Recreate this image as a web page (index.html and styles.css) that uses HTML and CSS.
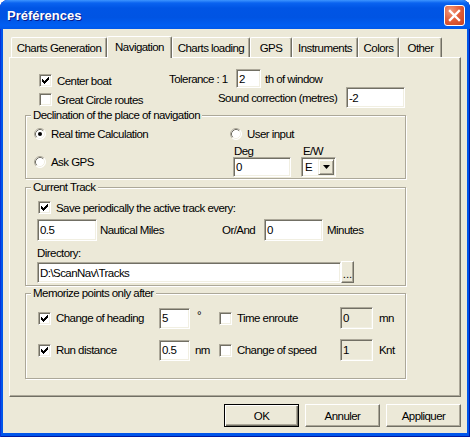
FILE: index.html
```html
<!DOCTYPE html>
<html>
<head>
<meta charset="utf-8">
<title>Préférences</title>
<link rel="stylesheet" href="styles.css">
</head>
<body>
<div class="window">
  <div class="titlebar">
    <span class="title">Préférences</span>
    <span class="close"><svg width="19" height="19" viewBox="0 0 19 19"><path d="M5 5 L14 14 M14 5 L5 14" stroke="#fff" stroke-width="2.4" stroke-linecap="square"/></svg></span>
  </div>
  <div class="client">
    <div class="tabs">
      <span class="tab t-gen">Charts Generation</span>
      <span class="tab tab-sel t-nav">Navigation</span>
      <span class="tab t-load">Charts loading</span>
      <span class="tab t-gps">GPS</span>
      <span class="tab t-ins">Instruments</span>
      <span class="tab t-col">Colors</span>
      <span class="tab t-oth">Other</span>
    </div>
    <div class="panel">
      <div class="top">
        <div class="top-left">
          <div class="ci"><span class="cb"><svg width="11" height="11" viewBox="0 0 11 11" shape-rendering="crispEdges"><path d="M2 4h1v3h-1z M3 5h1v3h-1z M4 6h1v3h-1z M5 5h1v3h-1z M6 4h1v3h-1z M7 3h1v3h-1z M8 2h1v3h-1z" fill="#000"/></svg></span><span>Center boat</span></div>
          <div class="ci"><span class="cb"></span><span>Great Circle routes</span></div>
        </div>
        <div class="top-right">
          <div class="tol-row"><span class="tol-lbl">Tolerance : 1</span><span class="field f-tol">2</span><span class="tol-unit">th of window</span></div>
          <div class="sound-row"><span class="sound-lbl">Sound correction (metres)</span><span class="field f-sound">-2</span></div>
        </div>
      </div>

      <div class="group g-decl">
        <div class="gtitle">Declination of the place of navigation</div>
        <div class="decl-r1">
          <div class="ri decl-left"><svg class="rb" width="12" height="12" viewBox="0 0 12 12"><circle cx="6" cy="6" r="5.5" fill="#fff"/><path d="M2.11 9.89 A5.5 5.5 0 0 1 9.89 2.11" stroke="#ACA899" fill="none"/><path d="M9.89 2.11 A5.5 5.5 0 0 1 2.11 9.89" stroke="#fff" fill="none"/><path d="M2.82 9.18 A4.5 4.5 0 0 1 9.18 2.82" stroke="#716F64" fill="none"/><path d="M9.18 2.82 A4.5 4.5 0 0 1 2.82 9.18" stroke="#F1EFE2" fill="none"/><circle cx="6" cy="6" r="2" fill="#000"/></svg><span>Real time Calculation</span></div>
          <div class="ri"><svg class="rb" width="12" height="12" viewBox="0 0 12 12"><circle cx="6" cy="6" r="5.5" fill="#fff"/><path d="M2.11 9.89 A5.5 5.5 0 0 1 9.89 2.11" stroke="#ACA899" fill="none"/><path d="M9.89 2.11 A5.5 5.5 0 0 1 2.11 9.89" stroke="#fff" fill="none"/><path d="M2.82 9.18 A4.5 4.5 0 0 1 9.18 2.82" stroke="#716F64" fill="none"/><path d="M9.18 2.82 A4.5 4.5 0 0 1 2.82 9.18" stroke="#F1EFE2" fill="none"/></svg><span>User input</span></div>
        </div>
        <div class="decl-r2">
          <div class="decl-left askgps"><div class="ri"><svg class="rb" width="12" height="12" viewBox="0 0 12 12"><circle cx="6" cy="6" r="5.5" fill="#fff"/><path d="M2.11 9.89 A5.5 5.5 0 0 1 9.89 2.11" stroke="#ACA899" fill="none"/><path d="M9.89 2.11 A5.5 5.5 0 0 1 2.11 9.89" stroke="#fff" fill="none"/><path d="M2.82 9.18 A4.5 4.5 0 0 1 9.18 2.82" stroke="#716F64" fill="none"/><path d="M9.18 2.82 A4.5 4.5 0 0 1 2.82 9.18" stroke="#F1EFE2" fill="none"/></svg><span>Ask GPS</span></div></div>
          <div class="col deg-col"><span class="sm-lbl">Deg</span><span class="field f-deg">0</span></div>
          <div class="col ew-col"><span class="sm-lbl">E/W</span><span class="select"><span class="sel-val">E</span><span class="sel-btn"><svg width="7" height="4" viewBox="0 0 7 4"><path d="M0 0H7L3.5 4z" fill="#000"/></svg></span></span></div>
        </div>
      </div>

      <div class="group g-track">
        <div class="gtitle">Current Track</div>
        <div class="ci track-cb"><span class="cb"><svg width="11" height="11" viewBox="0 0 11 11" shape-rendering="crispEdges"><path d="M2 4h1v3h-1z M3 5h1v3h-1z M4 6h1v3h-1z M5 5h1v3h-1z M6 4h1v3h-1z M7 3h1v3h-1z M8 2h1v3h-1z" fill="#000"/></svg></span><span>Save periodically the active track every:</span></div>
        <div class="track-row">
          <span class="field f-nm">0.5</span>
          <span class="nm-lbl">Nautical Miles</span>
          <span class="or-lbl">Or/And</span>
          <span class="field f-min">0</span>
          <span class="min-lbl">Minutes</span>
        </div>
        <div class="dir-lbl">Directory:</div>
        <div class="dir-row">
          <span class="field f-dir">D:\ScanNav\Tracks</span>
          <span class="browse">...</span>
        </div>
      </div>

      <div class="group g-mem">
        <div class="gtitle">Memorize points only after</div>
        <div class="mem-row">
          <div class="ci mem-cell"><span class="cb"><svg width="11" height="11" viewBox="0 0 11 11" shape-rendering="crispEdges"><path d="M2 4h1v3h-1z M3 5h1v3h-1z M4 6h1v3h-1z M5 5h1v3h-1z M6 4h1v3h-1z M7 3h1v3h-1z M8 2h1v3h-1z" fill="#000"/></svg></span><span>Change of heading</span></div>
          <span class="field f-small">5</span>
          <span class="unit u-deg">°</span>
          <div class="ci mem-cell"><span class="cb"></span><span>Time enroute</span></div>
          <span class="field f-dis">0</span>
          <span class="unit u-right">mn</span>
        </div>
        <div class="mem-row mem-row2">
          <div class="ci mem-cell"><span class="cb"><svg width="11" height="11" viewBox="0 0 11 11" shape-rendering="crispEdges"><path d="M2 4h1v3h-1z M3 5h1v3h-1z M4 6h1v3h-1z M5 5h1v3h-1z M6 4h1v3h-1z M7 3h1v3h-1z M8 2h1v3h-1z" fill="#000"/></svg></span><span>Run distance</span></div>
          <span class="field f-small">0.5</span>
          <span class="unit u-nm">nm</span>
          <div class="ci mem-cell"><span class="cb"></span><span>Change of speed</span></div>
          <span class="field f-dis">1</span>
          <span class="unit u-right">Knt</span>
        </div>
      </div>
    </div>
    <div class="buttons">
      <span class="btn btn-default">OK</span>
      <span class="btn">Annuler</span>
      <span class="btn">Appliquer</span>
    </div>
  </div>
</div>
</body>
</html>
```
FILE: styles.css
```css
* { box-sizing: border-box; }
html, body { margin: 0; padding: 0; background: #fff; }
body {
  width: 470px; height: 437px; overflow: hidden;
  font-family: "Liberation Sans", Arial, sans-serif;
  font-size: 11.5px; letter-spacing: -0.55px; color: #000;
}
.window {
  width: 470px; height: 437px;
  background: #0055EA;
  border-radius: 8px 8px 0 0;
  display: flex; flex-direction: column;
  box-shadow: inset 1px 0 #0831D9, inset -1px 0 #0019A0, inset 0 -1px #0019A0;
  overflow: hidden;
}
.titlebar {
  height: 29px; flex: none;
  display: flex; align-items: center;
  padding: 0 5px 0 7px;
  background: linear-gradient(180deg, #3D95FF 0, #0A63F0 3px, #0055E5 8px, #0054E3 60%, #005EF2 88%, #0058EA 100%);
}
.title {
  color: #fff; font-weight: bold; font-size: 13px; letter-spacing: 0;
  text-shadow: 1px 1px 0 #0A1A8A;
  margin-top: 1px;
}
.close {
  margin-left: auto;
  width: 21px; height: 21px;
  border: 1px solid #fff; border-radius: 3px;
  background: radial-gradient(circle at 30% 25%, #F19A7D 0, #E3603C 45%, #C8401F 100%);
  display: flex; align-items: center; justify-content: center;
  margin-top: 2px;
}
.client {
  flex: 1;
  margin: 0 3px 4px 3px;
  background: #ECE9D8;
  display: flex; flex-direction: column;
}
.tabs {
  display: flex; align-items: flex-start;
  margin: 7px 0 0 8px; height: 22px;
}
.tab {
  height: 20px; margin-top: 1px;
  border-top: 1px solid #fff; border-left: 1px solid #fff; border-right: 1px solid #716F64;
  box-shadow: inset -1px 0 #ACA899;
  border-radius: 2px 2px 0 0;
  background: #ECE9D8;
  display: flex; align-items: center; justify-content: center;
  padding-top: 1px; white-space: nowrap;
}
.tab-sel {
  height: 22px; margin-top: 0; padding-top: 0; padding-bottom: 2px;
  position: relative; z-index: 1;
}
.t-gen { width: 96px; }
.t-nav { width: 65px; }
.t-load { width: 78px; }
.t-gps { width: 42px; }
.t-ins { width: 66px; }
.t-col { width: 41px; }
.t-oth { width: 43px; }

.panel {
  margin: -1px 0 0 6px;
  width: 452px; height: 340px; flex: none;
  border: 1px solid; border-color: #fff #716F64 #716F64 #fff;
  box-shadow: inset -1px -1px 0 #ACA899;
  padding-top: 11px;
}
.top { display: flex; height: 39px; }
.top-left {
  margin-left: 29px; width: 130px; padding-top: 5px;
  display: flex; flex-direction: column; gap: 6px;
}
.ci { display: flex; align-items: center; gap: 5px; height: 13px; white-space: nowrap; }
.cb {
  width: 13px; height: 13px; flex: none;
  background: #fff;
  border: 1px solid; border-color: #ACA899 #fff #fff #ACA899;
  box-shadow: inset 1px 1px 0 #716F64, inset -1px -1px 0 #F1EFE2;
  display: block;
}
.cb svg { display: block; }
.top-right { display: flex; flex-direction: column; }
.tol-row { display: flex; align-items: center; height: 19px; }
.tol-lbl { width: 67px; white-space: nowrap; }
.tol-unit { margin-left: 4px; }
.sound-row { display: flex; align-items: center; height: 21px; margin: -1px 0 0 49px; }
.sound-lbl { width: 128px; white-space: nowrap; }

.field {
  display: flex; align-items: center;
  background: #fff;
  border: 1px solid; border-color: #ACA899 #fff #fff #ACA899;
  box-shadow: inset 1px 1px 0 #716F64, inset -1px -1px 0 #F1EFE2;
  padding-left: 2px; flex: none; white-space: nowrap;
}
.f-tol { width: 25px; height: 19px; }
.f-sound { width: 59px; height: 21px; }

.group {
  border: 1px solid #ACA899;
  box-shadow: 1px 1px 0 #fff, inset 1px 1px 0 #fff;
  margin-left: 15px; width: 381px;
}
.gtitle {
  display: table;
  margin: -7px 0 0 5px; padding: 0 2px;
  line-height: 13px; background: #ECE9D8;
}
.g-decl { margin-top: 7px; padding-bottom: 1px; }
.decl-r1 { display: flex; align-items: center; height: 13px; margin-top: 5px; }
.ri { display: flex; align-items: center; gap: 5px; height: 13px; white-space: nowrap; }
.rb { display: block; flex: none; }
.decl-left { margin-left: 8px; width: 196px; }
.decl-r2 { display: flex; margin-top: 6px; }
.askgps { padding-top: 9px; }
.col { display: flex; flex-direction: column; }
.sm-lbl { line-height: 11px; height: 11px; padding-left: 1px; }
.deg-col { margin-left: 3px; }
.ew-col { margin-left: 10px; }
.ew-col .sm-lbl { padding-left: 2px; }
.f-deg { width: 58px; height: 20px; }
.select {
  width: 35px; height: 20px;
  display: flex; align-items: stretch;
  background: #fff;
  border: 1px solid; border-color: #ACA899 #fff #fff #ACA899;
  box-shadow: inset 1px 1px 0 #716F64, inset -1px -1px 0 #F1EFE2;
  padding: 1px;
}
.sel-val { flex: 1; display: flex; align-items: center; padding-left: 2px; }
.sel-btn {
  width: 16px; flex: none;
  background: #ECE9D8;
  border: 1px solid; border-color: #F1EFE2 #716F64 #716F64 #F1EFE2;
  box-shadow: inset 1px 1px 0 #fff, inset -1px -1px 0 #ACA899;
  display: flex; align-items: center; justify-content: center;
}
.sel-btn svg { display: block; }

.g-track { margin-top: 8px; padding-bottom: 2px; }
.track-cb { margin: 7px 0 0 12px; }
.track-row { display: flex; align-items: center; margin: 5px 0 0 11px; height: 22px; }
.f-nm { width: 60px; height: 22px; }
.nm-lbl { margin-left: 3px; width: 122px; white-space: nowrap; }
.or-lbl { width: 42px; white-space: nowrap; }
.f-min { width: 59px; height: 22px; }
.min-lbl { margin-left: 4px; }
.dir-lbl { margin: 6px 0 0 11px; line-height: 13px; }
.dir-row { display: flex; align-items: flex-end; margin: 1px 0 0 11px; height: 22px; }
.f-dir { width: 304px; height: 21px; }
.browse {
  width: 13px; height: 22px;
  background: #ECE9D8;
  border: 1px solid; border-color: #fff #716F64 #716F64 #fff;
  box-shadow: inset -1px -1px 0 #ACA899;
  display: flex; align-items: flex-end; justify-content: center;
  padding-bottom: 4px; letter-spacing: 0; line-height: 8px;
}

.g-mem { margin-top: 7px; padding-bottom: 17px; }
.mem-row { display: flex; align-items: center; height: 22px; margin: 7px 0 0 12px; }
.mem-row2 { margin-top: 10px; }
.mem-cell { width: 121px; }
.f-small { width: 31px; height: 21px; }
.f-dis { width: 33px; height: 22px; background: #ECE9D8; }
.unit { width: 29px; white-space: nowrap; }
.u-deg { padding-left: 7px; align-self: flex-start; padding-top: 2px; }
.u-nm { padding-left: 5px; }
.u-right { padding-left: 6px; width: auto; }

.buttons {
  display: flex; justify-content: flex-end; gap: 6px;
  margin-top: 7px; padding-right: 6px;
}
.btn {
  width: 75px; height: 23px;
  background: #ECE9D8;
  border: 1px solid; border-color: #fff #716F64 #716F64 #fff;
  box-shadow: inset -1px -1px 0 #ACA899;
  display: flex; align-items: center; justify-content: center;
}
.btn-default {
  border-color: #000;
  box-shadow: inset 1px 1px 0 #fff, inset -1px -1px 0 #716F64, inset -2px -2px 0 #ACA899;
}
```
